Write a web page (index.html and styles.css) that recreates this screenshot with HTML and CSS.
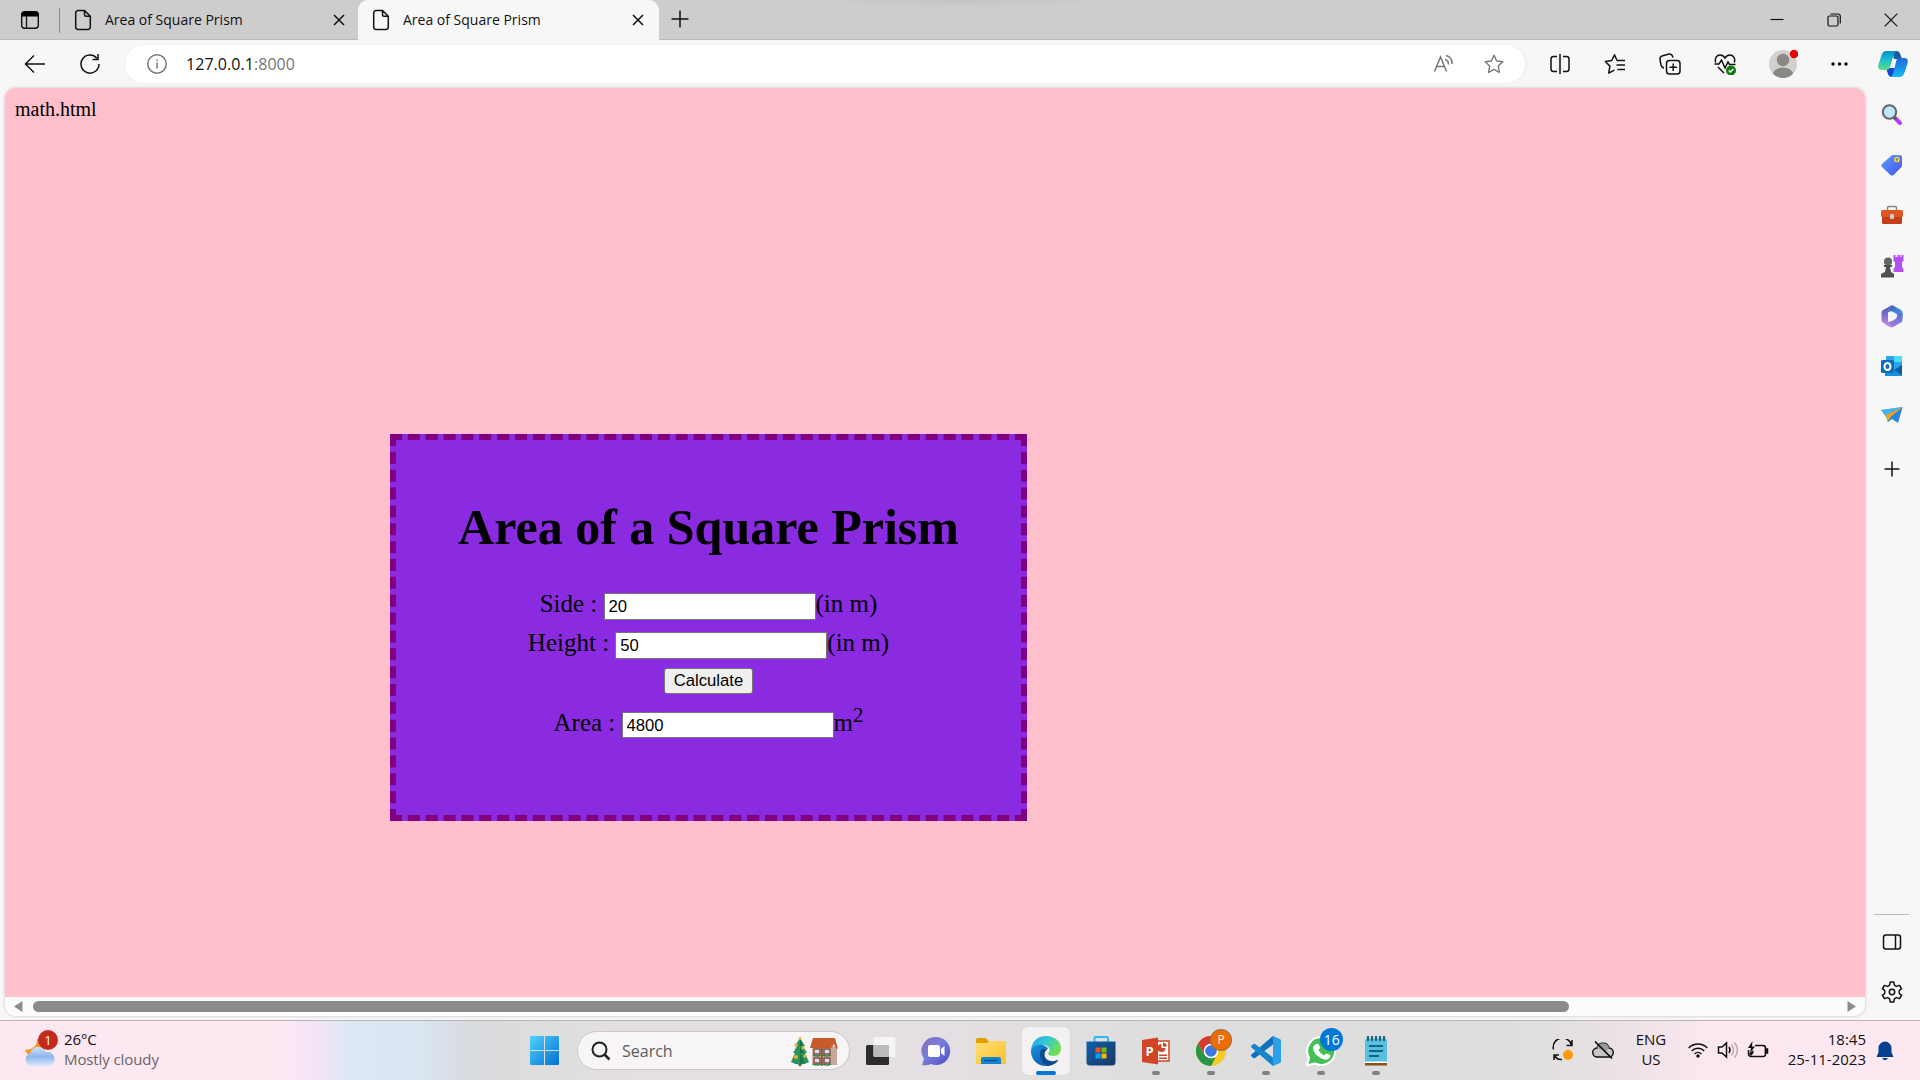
FILE: index.html
```html
<!DOCTYPE html>
<html lang="en">
<head>
<meta charset="utf-8">
<title>Area of Square Prism</title>
<link rel="stylesheet" href="styles.css">
</head>
<body>
<header class="tabs">
  <div class="workspace"><svg width="20" height="20" viewBox="0 0 20 20"><rect x="1.7" y="1.7" width="16.6" height="16.6" rx="3" fill="none" stroke="#111" stroke-width="1.4"/><path d="M1.5 6.5V4.5a3 3 0 0 1 3-3h11a3 3 0 0 1 3 3v2z" fill="#000"/><path d="M6.5 6v12" stroke="#111" stroke-width="1.3"/></svg></div>
  <div class="tab">
    <svg width="18" height="22" viewBox="0 0 18 22" class="line"><path d="M10.5 1.5H4A2.3 2.3 0 0 0 1.7 3.8v14.4A2.3 2.3 0 0 0 4 20.500h10a2.300 2.300 0 0 0 2.300-2.300V7.300zM10.500 1.500v4.300a1.500 1.500 0 0 0 1.500 1.500h4.300"/></svg>
    <span class="tab-title">Area of Square Prism</span>
    <svg width="12" height="12" viewBox="0 0 12 12" class="line"><path d="M1 1l10 10M11 1L1 11"/></svg>
  </div>
  <div class="tab active">
    <svg width="18" height="22" viewBox="0 0 18 22" class="line"><path d="M10.5 1.5H4A2.3 2.3 0 0 0 1.7 3.8v14.4A2.3 2.3 0 0 0 4 20.500h10a2.300 2.300 0 0 0 2.300-2.300V7.300zM10.500 1.500v4.300a1.500 1.500 0 0 0 1.500 1.500h4.300"/></svg>
    <span class="tab-title">Area of Square Prism</span>
    <svg width="12" height="12" viewBox="0 0 12 12" class="line"><path d="M1 1l10 10M11 1L1 11"/></svg>
  </div>
  <div class="new-tab"><svg width="18" height="18" viewBox="0 0 18 18" class="line"><path d="M9 .5v17M.5 9h17"/></svg></div>
  <div class="window-controls">
    <svg width="14" height="14" viewBox="0 0 14 14" class="line thin"><path d="M.5 6.500h13"/></svg>
    <svg width="14" height="14" viewBox="0 0 14 14" class="line thin"><rect x="1" y="3" width="10" height="10" rx="1.500"/><path d="M3.500 1H11a2.300 2.300 0 0 1 2.300 2.300V10.500"/></svg>
    <svg width="14" height="14" viewBox="0 0 14 14" class="line thin"><path d="M.7.7l12.600 12.600M13.300.7L.7 13.300"/></svg>
  </div>
</header>

<nav class="toolbar">
  <div class="nav-buttons">
    <svg width="22" height="20" viewBox="0 0 22 20" class="line"><path d="M21 10H2M10 1.500L1.500 10l8.500 8.500"/></svg>
    <svg width="22" height="22" viewBox="0 0 22 22" class="line"><path d="M17.800 5.200A9 9 0 1 0 20 11M19 1v5.500h-5.500"/></svg>
  </div>
  <div class="address">
    <svg width="20" height="20" viewBox="0 0 20 20" class="line grey"><circle cx="10" cy="10" r="9.200"/><path d="M10 8.500v6M10 5.200v1.500"/></svg>
    <span class="url">127.0.0.1<span class="port">:8000</span></span>
    <div class="address-actions">
      <svg width="22" height="20" viewBox="0 0 22 20" class="line grey"><path d="M1.500 17.500L7.500 3l6 14.500M3.700 12.500h7.700M12 5.500q3.500 1 3.500 5M13 1.500q6.500 1.500 6 8.500"/></svg>
      <svg width="22" height="22" viewBox="0 0 24 24" class="line grey"><path d="M12 2.500l2.900 6.200 6.700.9-4.900 4.700 1.200 6.800-5.900-3.300-5.900 3.300 1.200-6.800-4.900-4.700 6.700-.9z" stroke-linejoin="round"/></svg>
    </div>
  </div>
  <div class="actions">
    <svg width="22" height="22" viewBox="0 0 22 22" class="line"><path d="M8 3.500H4.500a2.500 2.500 0 0 0-2.500 2.500v10a2.500 2.500 0 0 0 2.500 2.500H8M11 1v20M14 3.500h3.500A2.500 2.500 0 0 1 20 6v10a2.500 2.500 0 0 1-2.500 2.500H14"/></svg>
    <svg width="22" height="22" viewBox="0 0 22 22" class="line"><path d="M13 7.500L10.500 1.800 7.700 7.500 1.300 8.500l4.600 4.600-1.200 7 5.700-3" stroke-linejoin="round"/><path d="M13 7.500h8M12.500 12h8.500M13.500 16.500H21"/></svg>
    <svg width="22" height="22" viewBox="0 0 22 22" class="line"><rect x="7.500" y="7.500" width="13.500" height="13.500" rx="3"/><path d="M14.200 10.500v7.500M10.500 14.200H18M5 15c-2-.4-2.600-1.500-3-3L1 6.500C.7 4.500 1.500 3.500 3 3L10 1c2-.3 3 .5 3.500 2l.5 1.500"/></svg>
    <svg width="22" height="22" viewBox="0 0 22 22" class="line"><path d="M1.700 9.500C.3 5 3 2 6 2c2.300 0 4 1.300 5 3 1-1.700 2.700-3 5-3 3 0 5.700 3 4.300 7.500M.5 11H5l2.500-4 3.500 8 3-6 1.500 2.500h6M4 14l6 6"/><circle cx="17" cy="17.500" r="5" fill="#117c10" stroke="none"/><path d="M14.800 17.500l1.500 1.500 3-3" stroke="#fff"/></svg>
    <svg width="30" height="30" viewBox="0 0 30 30"><defs><clipPath id="av"><circle cx="15" cy="15" r="14"/></clipPath></defs><g clip-path="url(#av)"><rect width="30" height="30" fill="#d2d0ce"/><circle cx="15" cy="11" r="6.200" fill="#8a8886"/><ellipse cx="15" cy="25.500" rx="10" ry="7" fill="#8a8886"/></g><circle cx="26" cy="5" r="4.200" fill="#e60000"/></svg>
    <svg width="20" height="6" viewBox="0 0 20 6"><circle cx="3" cy="3" r="1.700"/><circle cx="9.500" cy="3" r="1.700"/><circle cx="16" cy="3" r="1.700"/></svg>
    <svg width="30" height="28" viewBox="0 0 30 28"><defs><linearGradient id="cpa" x1="0" y1="0" x2="0" y2="1"><stop offset="0" stop-color="#078dcb"/><stop offset=".4" stop-color="#18b9d1"/><stop offset="1" stop-color="#5adf87"/></linearGradient><linearGradient id="cpb" x1="0" y1="0" x2="0" y2="1"><stop offset="0" stop-color="#2366d6"/><stop offset="1" stop-color="#13bbf9"/></linearGradient></defs><path d="M14 1h4.500q3 0 4 4l1.500 4h-8z" fill="#135ba0"/><path d="M8 18l2 6q1 3 4 3h2l5-9z" fill="#1848cf"/><path d="M8 1h11q-2 0-3 3l-4 13q-1 3-4 3H4q-5 0-3.500-5.500l3-9.500Q5 1 8 1z" fill="url(#cpa)"/><path d="M20 8h6q5 0 3.500 5.500l-3 9q-1.500 4.500-5 4.500H12q2 0 3-3l3-12q.7-4 2-4z" fill="url(#cpb)"/></svg>
  </div>
</nav>

<div class="workarea">
  <section class="viewport">
    <main class="page">
      <div class="filename">math.html</div>
      <div class="box">
        <h1>Area of a Square Prism</h1>
        <form>
          <div class="field">Side : <input type="text" value="20">(in m)</div>
          <div class="field">Height : <input type="text" value="50">(in m)</div>
          <div class="submit"><button type="button">Calculate</button></div>
          <div class="field result">Area : <input type="text" value="4800">m<sup>2</sup></div>
        </form>
      </div>
    </main>
    <div class="scrollbar">
      <svg width="9" height="11" viewBox="0 0 9 11"><path d="M8.500 0v11L0 5.500z" fill="#8b8b8b"/></svg>
      <div class="track"><div class="thumb"></div></div>
      <svg width="9" height="11" viewBox="0 0 9 11"><path d="M.5 0v11L9 5.500z" fill="#8b8b8b"/></svg>
    </div>
  </section>
  <aside class="sidebar">
    <svg viewBox="0 0 24 24"><path d="M14.500 14.500l5.500 5.500" stroke="#b53cf5" stroke-width="4" stroke-linecap="round"/><path d="M13 13l3 3" stroke="#555" stroke-width="3"/><circle cx="9.500" cy="9" r="6.700" fill="#c0e6fb" stroke="#666" stroke-width="2"/></svg>
    <svg viewBox="0 0 24 24"><defs><linearGradient id="tg" x1="0" y1="0" x2="1" y2="1"><stop offset="0" stop-color="#5aa0fb"/><stop offset="1" stop-color="#4950ee"/></linearGradient></defs><path d="M13 2l7.500.3q1.500 0 1.500 1.700v8q0 1.500-1 2.500l-7.500 7.500q-1.500 1.200-3 0L2 14q-1.500-1.500 0-3l9-8q1-1 2-1z" fill="url(#tg)"/><circle cx="17" cy="6.500" r="2.100" fill="#6182c5" stroke="#ffd12f" stroke-width="1.500"/></svg>
    <svg viewBox="0 0 24 24"><path d="M7.500 7V5q0-1.500 1.500-1.500h6Q16.500 3.500 16.500 5v2" fill="none" stroke="#888" stroke-width="1.500"/><rect x="2" y="12" width="20" height="9" rx="1.500" fill="#c63e18"/><rect x="1" y="7" width="22" height="7" rx="1.500" fill="#e0561f"/><rect x="10" y="11" width="4" height="5" rx="1" fill="#ccc"/></svg>
    <svg viewBox="0 0 24 24"><path d="M13.500 1h2v2h2V1h3v2h1V1h2v6l-1.500 1v5l1.500 2v3H13.500v-3l1.500-2V8l-1.500-1z" fill="#b451f3"/><circle cx="8" cy="7.500" r="4" fill="#656565"/><path d="M4 11h8v2h-2l1 5 3 2v3.500H1V20l4-2 1-5H4z" fill="#505050"/></svg>
    <svg viewBox="0 0 24 24"><defs><linearGradient id="ma" x1="0" y1="0" x2="1" y2="1"><stop offset="0" stop-color="#4355b8"/><stop offset="1" stop-color="#3fa9ee"/></linearGradient><linearGradient id="mb" x1="1" y1="0" x2="0" y2="1"><stop offset="0" stop-color="#5a70dc"/><stop offset="1" stop-color="#b880dc"/></linearGradient><linearGradient id="mc" x1="0" y1="0" x2="0" y2="1"><stop offset="0" stop-color="#4753bd"/><stop offset="1" stop-color="#c493e2"/></linearGradient></defs><path d="M11 1.500q1-.6 2 0l8 4.500q1.500 1 1.500 2.500V13L11 7 7 9z" fill="url(#ma)"/><path d="M22.500 9v7q0 1.500-1.500 2.500L13 23q-1.500.7-3 0l-5-3 10-5 2-2V9z" fill="url(#mb)"/><path d="M11.500 1.500L8 7v10l4 6q-.500.300-2 0L3 18.500Q1.500 17.500 1.500 16V8.500Q1.500 7 3 6z" fill="url(#mc)"/><path d="M12 7.700l4 2.300v4.500L12 17l-4-2.500V10z" fill="#f7f7f7"/></svg>
    <svg viewBox="0 0 24 24"><rect x="6" y="2" width="16" height="18" rx="1" fill="#28a8ea"/><path d="M14 2h8v6h-8z" fill="#50d9ff"/><path d="M5 11l9 5 8-5v11H5z" fill="#1490df"/><path d="M14 16l8-5v10z" fill="#0a5c9e"/><rect x="1" y="6" width="13" height="13" rx="1.500" fill="#0f6cbd"/><ellipse cx="7.500" cy="12.500" rx="3" ry="3.500" fill="none" stroke="#fff" stroke-width="2"/></svg>
    <svg viewBox="0 0 24 24"><path d="M1 6l22-3L7 14z" fill="#35a9ef"/><path d="M1 6l22-3L7 11z" fill="#46b4ef"/><path d="M22.500 3.500L18 19l-6-4-4 3-1.500-5z" fill="#2a86dc"/><path d="M22 3.500L6 11l1.500 7 3-5z" fill="#f3a119"/></svg>
    <svg viewBox="0 0 24 24" class="line add"><path d="M12 4.500v15M4.500 12h15"/></svg>
    <div class="sidebar-rule"></div>
    <svg viewBox="0 0 24 24" class="line"><rect x="3.500" y="5" width="17" height="14" rx="2.500"/><path d="M15.500 5v14"/></svg>
    <svg viewBox="0 0 24 24" class="line"><path d="M10.300 2h3.400l.700 3.200 2 1.200 3.200-1 1.900 3.200-2.300 2.200v2.400l2.300 2.200-1.900 3.200-3.200-1-2 1.200-.700 3.200h-3.400l-.700-3.200-2-1.200-3.200 1-1.900-3.200 2.300-2.200v-2.400L2.500 8.600l1.900-3.200 3.200 1 2-1.200z" stroke-linejoin="round"/><circle cx="12" cy="12" r="2.700"/></svg>
  </aside>
</div>

<footer class="taskbar">
  <div class="weather">
    <div class="weather-icon">
      <svg width="34" height="36" viewBox="0 0 34 36"><defs><linearGradient id="cl" x1="0" y1="0" x2="0" y2="1"><stop offset="0" stop-color="#d2e2fa"/><stop offset=".5" stop-color="#8fb4ee"/><stop offset="1" stop-color="#dce8fb"/></linearGradient></defs><path d="M14 6q1 11-12 12 4 9 14 6l6-8z" fill="#f39a1e"/><path d="M8 34a6.500 6.500 0 0 1-1-12.500 8.500 8.500 0 0 1 16-1.500 7 7 0 0 1 3 14z" fill="url(#cl)"/></svg>
      <span class="badge red">1</span>
    </div>
    <div class="weather-text"><span>26°C</span><span class="muted">Mostly cloudy</span></div>
  </div>
  <div class="start"><svg width="29" height="29" viewBox="0 0 29 29"><defs><linearGradient id="wn" gradientUnits="userSpaceOnUse" x1="0" y1="0" x2="29" y2="29"><stop offset="0" stop-color="#4fd3fe"/><stop offset="1" stop-color="#0270d0"/></linearGradient></defs><path d="M1 0h13v14H0V1q0-1 1-1zM15 0h13q1 0 1 1v13H15zM0 15h14v14H1q-1 0-1-1zM15 15h14v13q0 1-1 1H15z" fill="url(#wn)"/></svg></div>
  <div class="search">
    <svg width="20" height="20" viewBox="0 0 20 20" fill="none" stroke="#222" stroke-width="2"><circle cx="8.500" cy="8.500" r="7"/><path d="M13.500 13.500l5 5" stroke-width="2.500"/></svg>
    <span>Search</span>
    <svg class="holiday" width="48" height="30" viewBox="0 0 48 30"><rect x="7.500" y="24" width="3" height="5" fill="#8a5328"/><path d="M9 1l5 8h-2l4 7h-2l4 9q-9 5-18 0l4-9H2l4-7H4z" fill="#2c9360"/><path d="M9 1l3 8H9l4 7H9l5 10-5 1z" fill="#18754a"/><g fill="#f1b22d"><circle cx="5" cy="8" r="1.700"/><circle cx="12" cy="11" r="1.700"/><circle cx="5" cy="20" r="2"/><circle cx="14" cy="19" r="1.700"/><circle cx="9" cy="1.500" r="1.500"/></g><path d="M21 9h25v19H21z" fill="#d6b4a6"/><path d="M40 10h6v18h-6z" fill="#c9a69a"/><path d="M22 1h22l3 11-2-1-2-4-3 4H19z" fill="#c85a2c"/><g fill="#cfe0f2" stroke="#7a3f30" stroke-width="1.300"><rect x="23" y="12" width="6" height="5"/><rect x="33" y="12" width="6" height="5"/><rect x="23" y="21" width="6" height="5"/><rect x="33" y="21" width="6" height="5"/></g><path d="M22 18q4 2 8 0M32 18q4 2 8 0M22 27q4 2 8 0M32 27q4 2 8 0" fill="none" stroke="#2a8a4d" stroke-width="1.500"/><path d="M31 11v18" stroke="#7a3f30" stroke-width="1.500"/></svg>
  </div>
  <div class="apps">
    <div class="app"><svg viewBox="0 0 30 30"><rect x="0" y="9" width="23" height="20" rx="1.500" fill="#2c2c2a"/><rect x="7.500" y="1" width="22" height="20" rx="1.500" fill="#f6f6f6" fill-opacity=".92"/><path d="M7.500 9H23v12H9q-1.500 0-1.500-1.500z" fill="#bcbcbc"/></svg></div>
    <div class="app"><svg viewBox="0 0 30 30"><defs><linearGradient id="ch" x1="0" y1="0" x2="1" y2="1"><stop offset="0" stop-color="#8067ad"/><stop offset=".4" stop-color="#7b80dc"/><stop offset="1" stop-color="#4b4fc4"/></linearGradient></defs><path d="M15 1a14 14 0 1 1-5 27q-4 2-9 1l2-6A14 14 0 0 1 15 1z" fill="url(#ch)"/><rect x="7" y="9" width="12" height="12" rx="2" fill="#fff"/><path d="M20 13l3.500-3v10L20 17z" fill="#fff"/></svg></div>
    <div class="app"><svg viewBox="0 0 30 30"><defs><linearGradient id="fd" x1="0" y1="0" x2="1" y2="1"><stop offset="0" stop-color="#ffdf76"/><stop offset="1" stop-color="#fcc02d"/></linearGradient></defs><path d="M0 3.500Q0 2 1.500 2H9q1 0 2 1l2 2.500V12H0z" fill="#e0a100"/><path d="M0 7h11l2.500-2H29q1 0 1 1.500V28H0z" fill="url(#fd)"/><path d="M5 28v-5q0-2 2-2h16q2 0 2 2v5z" fill="#1583d2"/><path d="M8.500 24.500h13" stroke="#0b4f93" stroke-width="1.300"/></svg></div>
    <div class="app current"><svg viewBox="0 0 30 30"><defs><linearGradient id="ea" x1="0" y1="0" x2="1" y2=".5"><stop offset="0" stop-color="#1a9ce0"/><stop offset=".5" stop-color="#35c8d8"/><stop offset="1" stop-color="#71de51"/></linearGradient><linearGradient id="eb" x1="0" y1="0" x2="1" y2="1"><stop offset="0" stop-color="#1792e0"/><stop offset="1" stop-color="#0c4f9d"/></linearGradient></defs><path d="M0 14C1 5 7 0 15 0c9 0 15 6 15 12 0 5-3 8-7 8-4 0-6-1-6-2.500 0-1 1.500-1 1.500-3.500 0-3-3-5-7-5C7 9 3 11 0 14z" fill="url(#ea)"/><path d="M0 14c3-5 8-6.500 12-5 3 1 5 3 5 4-5 0-6 12 3 13 3 .4 5-.5 7.500-2C25 28 20 30 15 30 6 30-.500 23 0 14z" fill="url(#eb)"/><path d="M10 14c-3 7 1 14 8 15.500 4-1 7.500-3 9.500-6-8 4-14 0-14-5 0-2 1-4 2.500-5-3-1-5 0-6 .5z" fill="#114a8b"/></svg><span class="running"></span></div>
    <div class="app"><svg viewBox="0 0 30 30"><defs><linearGradient id="st" x1="0" y1="0" x2="1" y2="1"><stop offset="0" stop-color="#0c62b0"/><stop offset="1" stop-color="#1b365f"/></linearGradient></defs><path d="M8.500 6V2.500Q8.500 1 10 1h10.500Q22 1 22 2.500V6" fill="none" stroke="#28b9f0" stroke-width="2"/><path d="M.5 5.500h29V26q0 3.500-3.500 3.500H4Q.5 29.500.5 26z" fill="url(#st)"/><path d="M9.500 11.500h5v5h-5z" fill="#f25022"/><path d="M15.500 11.500h5v5h-5z" fill="#7fba00"/><path d="M9.500 17.500h5v5h-5z" fill="#00a4ef"/><path d="M15.500 17.500h5v5h-5z" fill="#ffb900"/></svg></div>
    <div class="app"><svg viewBox="0 0 30 30"><rect x="15" y="5" width="13" height="20" fill="#fff" stroke="#cf4526" stroke-width="1.500"/><path d="M20.500 8a4 4 0 1 0 4 4h-4z" fill="#cf4526"/><path d="M22 6.800a3.800 3.800 0 0 1 3.800 3.800H22zM18 18.500h8V20h-8zM18 21.500h8V23h-8z" fill="#cf4526"/><path d="M1 4l16-2.500v27L1 26z" fill="#d14525"/><text x="4.500" y="19.500" class="glyph p-letter">P</text></svg><span class="running"></span></div>
    <div class="app"><svg viewBox="0 0 30 30"><circle cx="15" cy="15" r="15" fill="#f8ca26"/><path d="M2 7.500A15 15 0 0 1 28 7.500H15L8.500 19z" fill="#d93a2f"/><path d="M2 7.500L8.500 19l6.500 3.500 4.500-1L15 30A15 15 0 0 1 2 7.500z" fill="#279647"/><circle cx="15" cy="15" r="7.300" fill="#fff"/><circle cx="15" cy="15" r="5.800" fill="#3b78e7"/></svg><span class="badge orange">P</span><span class="running"></span></div>
    <div class="app"><svg viewBox="0 0 30 30"><path d="M22 0l7 3q1 .5 1 1.500v21q0 1-1 1.500l-7 3z" fill="#2b9fe8"/><path d="M22 0v8.500L4 22q-1 .5-1.500 0L.5 20.500q-1-1 0-2z" fill="#0f70bb"/><path d="M22 30v-8.500L4 8Q3 7.500 2.500 8L.5 9.500q-1 1 0 2z" fill="#1685cc"/></svg><span class="running"></span></div>
    <div class="app"><svg viewBox="0 0 30 30"><path d="M15.500 1A14 14 0 1 1 9 27.500L1 29.500 3 22A14 14 0 0 1 15.500 1z" fill="#44bf54" stroke="#fff" stroke-width="2.200"/><path d="M10 8q2-1 3 1l1 2.500q0 1-1.500 2.500 2 4 5.500 5.500l2-2q1-.5 4 1.500 1 .8-.5 3-3 3-8 .5-8-4-8.500-10.500 0-2.500 3-4z" fill="#fff"/></svg><span class="badge blue">16</span><span class="running"></span></div>
    <div class="app"><svg viewBox="0 0 30 30"><rect x="4" y="3" width="22" height="24" rx="1.500" fill="#57bfdf"/><path d="M4 27h22v2.500H4z" fill="#8e4d13"/><path d="M4 25.500h22v1.500H4z" fill="#fff"/><path d="M7 1v3M11 1v3M15 1v3M19 1v3M23 1v3" stroke="#14627e" stroke-width="2.300" stroke-linecap="round"/><path d="M8 10h14M8 15h14M8 20h10" stroke="#14627e" stroke-width="2"/></svg><span class="running"></span></div>
  </div>
  <div class="tray">
    <svg width="22" height="22" viewBox="0 0 22 22" class="line"><path d="M1.500 10.500A9 9 0 0 1 19.500 6M20 1v5.500h-5.500M2 21v-5h5M2 16q3 5 8 4.500"/><circle cx="16" cy="16" r="5" fill="#f90" stroke="none"/></svg>
    <svg width="22" height="18" viewBox="0 0 22 18" class="line"><path d="M5.500 16a4.500 4.500 0 0 1-.5-9 6.200 6.200 0 0 1 12 0 4.500 4.500 0 0 1-.5 9z" fill="#c8c5c7"/><path d="M5 7a6.200 6.200 0 0 1 12 0l-3 3z" fill="#999" stroke="none"/><path d="M3 .5l17 17" stroke-width="1.700"/></svg>
    <div class="language"><span>ENG</span><span>US</span></div>
    <svg width="20" height="16" viewBox="0 0 20 16" class="line"><path d="M.7 6a13 13 0 0 1 18.600 0M3.700 9a8.800 8.800 0 0 1 12.600 0M6.500 12a5 5 0 0 1 7 0"/><circle cx="10" cy="14" r="1.700" fill="#111" stroke="none"/></svg>
    <svg width="22" height="18" viewBox="0 0 22 18" class="line"><path d="M1.500 6v6H5l4.500 4V2L5 6zM12 6q2 3 0 6"/><path d="M14.500 3.500q4 5.500 0 11M17.500 1.500q6 7.500 0 15" stroke="#b9aab2"/></svg>
    <svg width="22" height="18" viewBox="0 0 22 18" class="line"><path d="M8 4.500h8A2.500 2.500 0 0 1 18.500 7v6a2.500 2.500 0 0 1-2.500 2.500H4A2.500 2.500 0 0 1 1.500 13V9"/><path d="M18.500 8h2v4h-2z" fill="#111"/><path d="M5.500 0L1 7h3l-1 5 5-6.500H5z" fill="#111" stroke="none"/><path d="M2.500 14.500V12l4-3v3l-2 2.500z" fill="#111" stroke="none"/></svg>
    <div class="clock"><span>18:45</span><span>25-11-2023</span></div>
    <svg width="18" height="20" viewBox="0 0 18 20"><path d="M9 .5a6.500 6.500 0 0 1 6.500 6.500v4.500L17.500 16H.5l2-4.500V7A6.500 6.500 0 0 1 9 .5zM6 17h6q-3 4.500-6 0z" fill="#053f90"/></svg>
  </div>
</footer>
</body>
</html>
```
FILE: styles.css
```css
* { box-sizing: border-box; }
body {
  margin: 0;
  width: 1920px;
  height: 1080px;
  overflow: hidden;
  display: flex;
  flex-direction: column;
  background: #f7f7f7;
  color: #111;
  font-family: "Open Sans", "Noto Sans", sans-serif;
}
svg { display: block; flex: none; }
.line { fill: none; stroke: #111; stroke-width: 1.5; }
.thin { stroke-width: 1.2; }
.grey { stroke: #767676; }

.tabs {
  height: 40px;
  flex: none;
  display: flex;
  background: radial-gradient(ellipse 150px 8px at 962px 0, #c4c4c4, #cdcdcd);
  box-shadow: inset 0 -1px #bababa;
}
.workspace {
  width: 60px;
  height: 25px;
  margin-top: 8px;
  padding: 2px 0 0 20px;
  border-right: 1px solid #888;
}
.tab {
  width: 298px;
  height: 40px;
  display: flex;
  align-items: center;
  padding: 0 13px 0 14px;
}
.tab.active {
  width: 301px;
  background: #f7f7f7;
  border-radius: 10px 10px 0 0;
  padding-left: 14px;
  padding-right: 15px;
}
.tab-title {
  flex: 1;
  margin-left: 13px;
  padding-bottom: 2px;
  font-size: 14px;
  letter-spacing: 0;
  white-space: nowrap;
}
.new-tab { padding: 10px 0 0 12px; }
.window-controls {
  margin-left: auto;
  display: flex;
  gap: 43px;
  padding: 13px 22px 0 0;
}

.toolbar {
  height: 48px;
  flex: none;
  display: flex;
  align-items: center;
  padding-bottom: 1px;
}
.nav-buttons {
  width: 125px;
  display: flex;
  align-items: center;
  gap: 33px;
  padding-left: 24px;
}
.address {
  width: 1400px;
  height: 38px;
  display: flex;
  align-items: center;
  padding: 0 20px 0 22px;
  border-radius: 19px;
  background: #fff;
  box-shadow: 0 0 3px rgba(0, 0, 0, 0.08);
}
.url { margin-left: 19px; font-size: 16px; letter-spacing: 0.05px; }
.port { color: #767676; }
.address-actions { margin-left: auto; display: flex; align-items: center; gap: 28px; }
.actions { display: flex; align-items: center; padding-left: 24px; }
.actions svg { margin-right: 33px; }
.actions svg:nth-child(4) { margin-right: 32px; }
.actions svg:nth-child(5) { margin-right: 32px; }
.actions svg:nth-child(6) { margin-right: 28px; }
.actions svg:nth-child(7) { margin-right: 0; }

.workarea { flex: 1; min-height: 0; display: flex; padding: 0 0 4px 5px; }
.viewport {
  width: 1860px;
  display: flex;
  flex-direction: column;
  overflow: hidden;
  border-radius: 10px;
  background: #fcfcfc;
  box-shadow: 0 0 3px rgba(0, 0, 0, 0.25);
}
.page {
  height: 909px;
  padding: 10px;
  background: #ffc0cb;
  color: #000;
  font-family: "Liberation Serif", "Times New Roman", serif;
  font-size: 20px;
}
.filename { height: 23px; line-height: 23px; }
.box {
  width: 637px;
  height: 387px;
  margin: 313px 0 0 375px;
  padding-top: 58px;
  border: 6px dashed purple;
  background: blueviolet;
  font-size: 25px;
  text-align: center;
}
h1 { margin: 0 0 33px; font-size: 50px; line-height: 58px; }
.field { height: 39px; display: flex; justify-content: center; align-items: baseline; white-space: pre; line-height: 29px; }
input {
  width: 212px;
  height: 27px;
  padding: 3px 4px 1px;
  border: 1px solid #767676;
  background: #fff;
  color: #000;
  font: 16.67px "Liberation Sans", Arial, sans-serif;
}
.submit { height: 41px; padding-top: 1px; display: flex; justify-content: center; align-items: flex-start; }
button {
  width: 89px;
  height: 26px;
  padding: 0;
  border: 1px solid #767676;
  border-radius: 3px;
  background: #efefef;
  color: #000;
  font: 16.67px/22px "Liberation Sans", Arial, sans-serif;
}
.result input { height: 26px; }
sup { font-size: 20.8px; line-height: 0; vertical-align: baseline; align-self: flex-start; padding-top: 7px; }
.scrollbar {
  height: 19px;
  display: flex;
  align-items: center;
  padding: 0 9px 0 9px;
}
.track { flex: 1; padding: 0 0 0 10px; }
.thumb { width: 1536px; height: 11px; border-radius: 6px; background: #8b8b8b; }

.sidebar {
  flex: 1;
  display: flex;
  flex-direction: column;
  align-items: center;
  padding: 15px 2px 12px 0;
  gap: 26.2px;
}
.sidebar svg { width: 24px; height: 24px; }
.sidebar .add { margin-top: 3px; }
.sidebar-rule { width: 35px; height: 1px; margin-top: auto; margin-bottom: -11px; background: #bbb; }

.taskbar {
  height: 60px;
  flex: none;
  display: flex;
  align-items: center;
  border-top: 1px solid #b9b5b7;
  background: linear-gradient(90deg, #fde8f1 0, #fde8f1 280px, #f3e5f7 315px, #dde8f5 350px, #d9e5f0 420px, #d9dce3 460px, #dcdcdc 500px, #e4dfe2 640px, #e4dfe2 950px, #dddddd 1200px, #dedede 1500px, #e6e0e3 1590px, #fde8f1 1720px);
  font-size: 15px;
}
.weather { width: 530px; display: flex; align-items: center; padding-left: 23px; gap: 7px; }
.weather-icon { position: relative; padding-bottom: 2px; }
.weather-text, .language, .clock { display: flex; flex-direction: column; line-height: 20px; padding-bottom: 4px; white-space: nowrap; }
.weather-text { letter-spacing: -0.1px; }
.muted { color: #666; }
.badge {
  position: absolute;
  display: flex;
  align-items: center;
  justify-content: center;
  border-radius: 50%;
  color: #fff;
}
.red { left: 15px; top: -2px; width: 20px; height: 20px; background: #c42b1c; font-size: 13px; }
.start { width: 47px; }
.search {
  width: 273px;
  height: 39px;
  display: flex;
  align-items: center;
  padding: 0 10px 0 13px;
  border: 1px solid #cbc7c9;
  border-radius: 20px;
  background: #f7f5f6;
  color: #5c5c5c;
  font-size: 16px;
}
.search span { margin-left: 11px; }
.holiday { margin: 3px 0 0 auto; }
.apps { display: flex; padding-left: 3px; }
.app {
  position: relative;
  width: 48px;
  height: 48px;
  margin: 0 3.55px;
  display: flex;
  align-items: center;
  justify-content: center;
  border-radius: 5px;
}
.app svg { width: 30px; height: 30px; }
.current { background: #f4f1f3; box-shadow: 0 0 1px #aaa; }
.running { position: absolute; left: 20px; bottom: 0; width: 8px; height: 4px; border-radius: 2px; background: #828081; }
.current .running { left: 14px; width: 20px; background: #0078d4; }
.glyph { font-family: "Open Sans", sans-serif; font-weight: 700; fill: #fff; }
.p-letter { font-size: 13px; }
.orange { left: 24px; top: 3px; width: 20px; height: 20px; background: #ef6c00; font-size: 12px; box-shadow: 0 0 0 1px #a56a42; }
.blue { left: 23px; top: 1px; width: 23px; height: 23px; background: #0078d4; font-size: 14px; }
.tray { margin-left: auto; display: flex; align-items: center; padding-right: 26px; }
.tray svg:nth-child(1) { margin-right: 18px; }
.language { width: 36px; margin: 0 19px 0 19px; align-items: center; }
.tray svg:nth-child(4) { margin: 0 9px 2px 18px; }
.tray svg:nth-child(4) { margin-left: 0; }
.tray svg:nth-child(5) { margin: 0 8px 2px 0; }
.tray svg:nth-child(6) { margin-bottom: 2px; }
.tray svg:nth-child(1), .tray svg:nth-child(2) { margin-bottom: 1px; }
.clock { width: 97px; align-items: flex-end; margin-right: 10px; }
```
